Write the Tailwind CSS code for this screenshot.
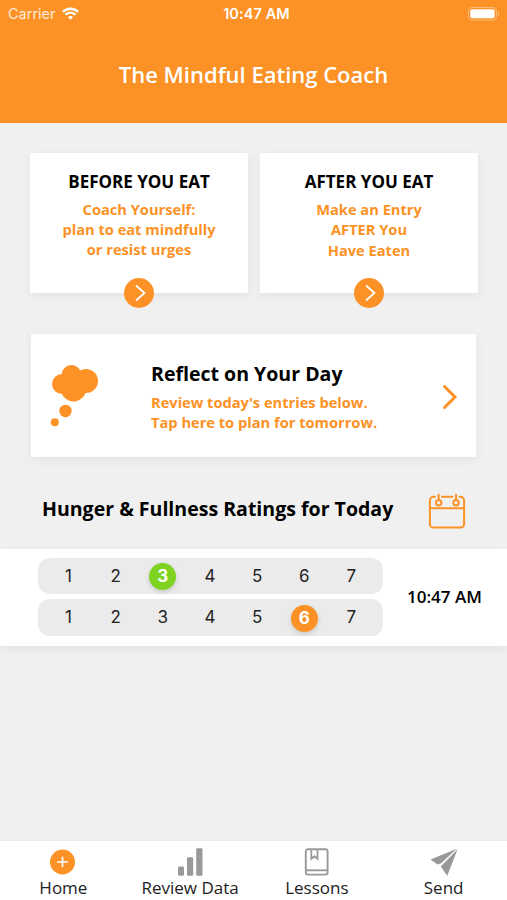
<!DOCTYPE html>
<html lang="en">
<head>
    <meta charset="UTF-8">
    <meta name="viewport" content="width=device-width, initial-scale=1.0">
    <title>The Mindful Eating Coach</title>
    <script src="https://cdn.jsdelivr.net/npm/@tailwindcss/browser@4"></script>
</head>
<body class="bg-[#f0f0f0] font-['Open_Sans',sans-serif] text-black">
    <div class="w-[507px] h-[900px] flex flex-col overflow-hidden">
        <!-- Header -->
        <header class="h-[123px] shrink-0 bg-[#fc9226] text-white">
            <div class="h-7 grid grid-cols-3 items-center pl-2 pr-[7px] font-['Inter',sans-serif] text-[15px]">
                <div class="flex items-center gap-[7px]">
                    <span class="text-[14.5px] text-white/80">Carrier</span>
                    <svg class="-mt-0.5 -ml-px w-[17px] h-[13px]" viewBox="0 0 17 13" fill="none" stroke="currentColor" stroke-width="2.4">
                        <path d="M.9 4.9a10.6 10.6 0 0 1 15.2 0M3.5 7.8a6.8 6.8 0 0 1 10 0"/>
                        <path d="M8.5 12.8 5.9 10.2a3.7 3.7 0 0 1 5.2 0z" fill="currentColor" stroke="none"/>
                    </svg>
                </div>
                <span class="pl-[5px] text-center font-semibold text-[14.5px] tracking-[0.1px] whitespace-nowrap">10:47 AM</span>
                <svg class="-mt-px w-8 h-[14px] justify-self-end" viewBox="0 0 32 14" fill="none">
                    <rect x="0.5" y="0.5" width="28" height="12.5" rx="3.5" stroke="#fff" stroke-opacity="0.4"/>
                    <rect x="2.3" y="2.3" width="24.4" height="9" rx="2" fill="#fff"/>
                    <path d="M30 4.8v4.4c1.4-.6 1.4-3.8 0-4.4z" fill="#fff" fill-opacity="0.5"/>
                </svg>
            </div>
            <h1 class="mt-[31px] text-center text-[22px] leading-[30px] font-semibold">The Mindful Eating Coach</h1>
        </header>

        <main class="grow">
            <!-- Before / after cards -->
            <div class="mt-[30px] ml-[30px] flex gap-3">
                <a href="#" class="relative block w-[218px] h-[140px] pt-[17px] bg-white shadow-[0_3px_10px_rgba(0,0,0,0.06)] text-center">
                    <h2 class="text-[17px] leading-6 font-bold">BEFORE YOU EAT</h2>
                    <p class="mt-[5px] text-[14.65px] leading-5 font-bold text-[#fc9226]">Coach Yourself:<br>plan to eat mindfully<br>or resist urges</p>
                    <svg class="absolute left-[94px] -bottom-[15px] w-[30px] h-[30px]" viewBox="0 0 30 30" fill="none">
                        <circle cx="15" cy="15" r="15" fill="#fc9226"/>
                        <path d="M12 7.5 20.5 15 12 22.5" stroke="#fff" stroke-width="1.8"/>
                    </svg>
                </a>
                <a href="#" class="relative block w-[218px] h-[140px] pt-[17px] bg-white shadow-[0_3px_10px_rgba(0,0,0,0.06)] text-center">
                    <h2 class="text-[17px] leading-6 font-bold">AFTER YOU EAT</h2>
                    <p class="mt-[5px] text-[14.65px] leading-[20.4px] font-bold text-[#fc9226]">Make an Entry<br>AFTER You<br>Have Eaten</p>
                    <svg class="absolute left-[94px] -bottom-[15px] w-[30px] h-[30px]" viewBox="0 0 30 30" fill="none">
                        <circle cx="15" cy="15" r="15" fill="#fc9226"/>
                        <path d="M12 7.5 20.5 15 12 22.5" stroke="#fff" stroke-width="1.8"/>
                    </svg>
                </a>
            </div>

            <!-- Reflect card -->
            <a href="#" class="mt-[41px] ml-[31px] flex w-[445px] h-[123px] bg-white shadow-[0_3px_10px_rgba(0,0,0,0.06)]">
                <svg class="mt-[30px] ml-[19px] w-[50px] h-[64px] shrink-0" viewBox="0 0 50 64" fill="#fc9226">
                    <circle cx="21.5" cy="11" r="10"/>
                    <circle cx="36" cy="17" r="12"/>
                    <circle cx="12" cy="20" r="10"/>
                    <circle cx="23.5" cy="25" r="12.5"/>
                    <circle cx="15.5" cy="47" r="6.2"/>
                    <circle cx="4.8" cy="58.3" r="4"/>
                </svg>
                <div class="ml-[51px] mt-[26px] grow">
                    <h2 class="text-[19.55px] leading-[27px] font-bold">Reflect on Your Day</h2>
                    <p class="mt-[5px] text-[14.65px] leading-5 font-bold text-[#fc9226] whitespace-nowrap">Review today's entries below.<br>Tap here to plan for tomorrow.</p>
                </div>
                <svg class="mt-[50px] mr-[18px] w-4 h-[26px] shrink-0" viewBox="0 0 16 26" fill="none" stroke="#fc9226" stroke-width="3" stroke-linecap="round">
                    <path d="M2.5 2.5 13 13 2.5 23.5"/>
                </svg>
            </a>

            <!-- Ratings -->
            <div class="mt-[35px] pl-[42px] pr-[41px] h-[38px] flex justify-between">
                <h2 class="mt-[3px] text-[19.55px] leading-[28px] font-bold whitespace-nowrap">Hunger &amp; Fullness Ratings for Today</h2>
                <svg class="mt-[1px] w-[38px] h-[37px]" viewBox="0 0 38 37" fill="none" stroke="#fc9226" stroke-width="2" stroke-linecap="round">
                    <path d="M7 3.8H5.5a3.6 3.6 0 0 0-3.6 3.6v23.5a3.6 3.6 0 0 0 3.6 3.6h27a3.6 3.6 0 0 0 3.6-3.6V7.400a3.600 3.600 0 0 0-3.6-3.6H31.500M14 3.8h10.500M2 15.200h34"/>
                    <circle cx="10.700" cy="9.800" r="2.700"/>
                    <circle cx="28" cy="9.800" r="2.700"/>
                    <path d="M10.700 1.800v5M28 1.800v5"/>
                </svg>
            </div>
            <section class="mt-[19px] h-[97px] flex items-start bg-white pt-[9px] pl-[38px] shadow-[0_3px_8px_rgba(0,0,0,0.06)]">
                <div class="w-[345px] flex flex-col gap-[5px] font-['Inter',sans-serif] text-[17px] text-[#222]">
                    <div class="h-9 rounded-xl bg-[#ebebeb] grid grid-cols-7 items-center justify-items-center pt-px pl-[7px] pr-2">
                        <span>1</span>
                        <span>2</span>
                        <span class="w-[27px] h-[27px] rounded-full bg-[#7ed321] text-white font-bold text-center leading-[27px] shadow-[0_2px_5px_rgba(0,0,0,0.15)]">3</span>
                        <span>4</span>
                        <span>5</span>
                        <span>6</span>
                        <span>7</span>
                    </div>
                    <div class="h-[37px] rounded-xl bg-[#ebebeb] grid grid-cols-7 items-center justify-items-center pt-px pl-[7px] pr-2">
                        <span>1</span>
                        <span>2</span>
                        <span>3</span>
                        <span>4</span>
                        <span>5</span>
                        <span class="w-[27px] h-[27px] rounded-full bg-[#fc9226] text-white font-bold text-center leading-[27px] shadow-[0_2px_5px_rgba(0,0,0,0.15)]">6</span>
                        <span>7</span>
                    </div>
                </div>
                <span class="ml-[24px] mt-[27px] text-[17px] leading-6 font-semibold whitespace-nowrap">10:47 AM</span>
            </section>
        </main>

        <!-- Tab bar -->
        <nav class="h-[60px] shrink-0 border-t border-[#ececec] bg-white grid grid-cols-4 text-[17px] leading-6 text-[#222]">
            <a href="#" class="flex flex-col items-center pt-[7px]">
                <svg class="w-[28px] h-[28px]" viewBox="0 0 28 28" fill="none">
                    <circle cx="13.5" cy="14" r="12.5" fill="#fc9226"/>
                    <path d="M13.5 8.7v10.6M8.2 14h10.6" stroke="#fff" stroke-width="1.7"/>
                </svg>
                <span>Home</span>
            </a>
            <a href="#" class="flex flex-col items-center pt-[7px]">
                <svg class="w-[28px] h-[28px]" viewBox="0 0 28 28" fill="#999">
                    <rect x="2" y="18.5" width="6" height="9.2" rx="1.3"/>
                    <rect x="11" y="9.3" width="6.2" height="18.4" rx="1.3"/>
                    <rect x="20.2" y="0.3" width="6.3" height="27.4" rx="1.3"/>
                </svg>
                <span>Review Data</span>
            </a>
            <a href="#" class="flex flex-col items-center pt-[7px]">
                <svg class="w-[28px] h-[28px]" viewBox="0 0 28 28" fill="none" stroke="#999" stroke-width="1.9">
                    <rect x="2.8" y="1.3" width="21.8" height="25.3" rx="2"/>
                    <path d="M3 22.3h21.6"/>
                    <path d="M8.3 1.500v9.300l3.100-2.600 3.100 2.600V1.500" stroke-width="1.8"/>
                </svg>
                <span>Lessons</span>
            </a>
            <a href="#" class="flex flex-col items-center pt-[7px]">
                <svg class="w-[28px] h-[28px]" viewBox="0 0 28 28" fill="#999">
                    <path d="M26.800.8.5 11.500 7.500 16.600l3.700-1.300z"/>
                    <path d="M27.600 1.200 17.300 27.800 10.700 18.600z"/>
                </svg>
                <span>Send</span>
            </a>
        </nav>
    </div>
</body>
</html>
